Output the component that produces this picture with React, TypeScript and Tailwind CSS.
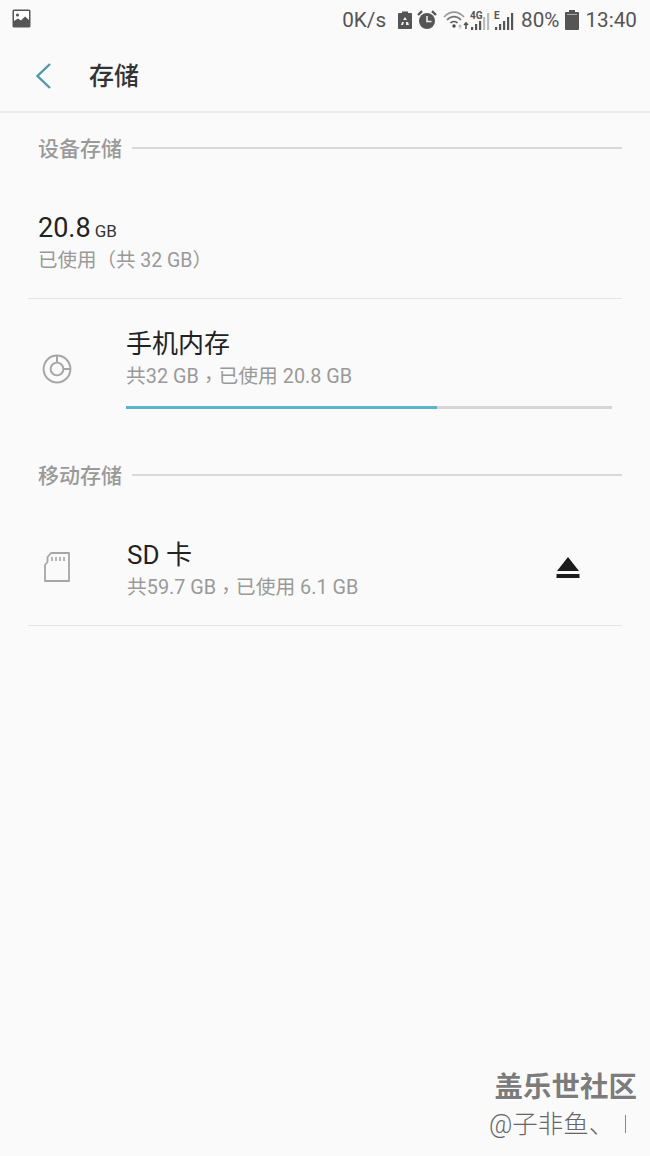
const FONT = "font-['Roboto','Noto_Sans_CJK_SC',sans-serif]";

// TC comma is centred in its box like the device font, it just needs to sit lower
function Comma() {
  return <span className="inline-block translate-y-[4px] font-['Noto_Sans_CJK_TC',sans-serif]">，</span>;
}

function StatusBar() {
  return (
    <div className="flex h-10 items-center pl-3 pr-[13px] text-[#555]">
      <svg width="19" height="19" viewBox="0 0 19 19" className="mb-[3px]">
        <rect x="0.5" y="0.5" width="18" height="18" rx="1.5" fill="#555" />
        <rect x="2" y="2" width="15" height="12" fill="#fff" />
        <circle cx="5.5" cy="6" r="1.6" fill="#555" />
        <path d="M2 14 L2 12 L6 9.5 L9 11.5 L13 7.5 L17 11 L17 14 Z" fill="#555" />
      </svg>
      <div className="ml-auto flex items-center">
        <span className="text-[20.7px] leading-none">0K/s</span>
        {/* power saving battery */}
        <svg width="14" height="18" viewBox="0 0 14 18" className="ml-[12px]">
          <path d="M4 0.5 H10 V2 H13 a1 1 0 0 1 1 1 V17 a1 1 0 0 1 -1 1 H1 a1 1 0 0 1 -1 -1 V3 a1 1 0 0 1 1 -1 H4 Z" fill="#555" />
          <path d="M7 6 L9 9 H5 Z M4 11 L6 11 L5 14 H3 Z M10 11 L11 14 H8 L8 11 Z" fill="#eee" />
        </svg>
        {/* alarm */}
        <svg width="20" height="20" viewBox="0 0 20 20" className="ml-[5px]">
          <circle cx="10" cy="11" r="8" fill="#555" />
          <path d="M1 5 L5 1.2 M15 1.2 L19 5" stroke="#555" strokeWidth="2.4" />
          <path d="M10 6 V11.5 H14.5" stroke="#eee" strokeWidth="1.6" fill="none" />
        </svg>
        {/* wifi */}
        <svg width="26" height="20" viewBox="0 0 26 20" className="ml-[6px]" fill="none">
          <path d="M1 7 C7 0.5 15 0.5 21 7" stroke="#999" strokeWidth="1.7" />
          <path d="M4 10 C8 5.5 14 5.5 18 10" stroke="#777" strokeWidth="1.7" />
          <path d="M7.5 13 C9.5 11 12.5 11 14.5 13" stroke="#555" strokeWidth="1.7" />
          <circle cx="11" cy="16" r="1.7" fill="#444" />
          <path d="M17 15 V19 M15.5 16.5 L17 15 L18.5 16.5" stroke="#bbb" strokeWidth="1.2" />
          <path d="M23 19 V13 M21 15 L23 13 L25 15" stroke="#555" strokeWidth="1.6" />
        </svg>
        {/* 4G signal */}
        <svg width="20" height="20" viewBox="0 0 20 20" className="ml-[1px]">
          <text x="0" y="9" fontSize="10" fontWeight="700" fill="#555" fontFamily="Roboto">4G</text>
          <path d="M1 17 h2.2 v3 h-2.2 Z M5 14 h2.2 v6 h-2.2 Z M9 11 h2.2 v9 h-2.2 Z" fill="#555" />
          <path d="M13 7 h2.2 v13 h-2.2 Z M17 3 h2.2 v17 h-2.2 Z" fill="#bbb" />
        </svg>
        {/* E signal */}
        <svg width="20" height="20" viewBox="0 0 20 20" className="ml-[4px]">
          <text x="0" y="9" fontSize="10" fontWeight="700" fill="#555" fontFamily="Roboto">E</text>
          <path d="M1 17 h2.2 v3 h-2.2 Z M5 14 h2.2 v6 h-2.2 Z M9 11 h2.2 v9 h-2.2 Z M13 7 h2.2 v13 h-2.2 Z M17 3 h2.2 v17 h-2.2 Z" fill="#555" />
        </svg>
        <span className="ml-[7px] text-[20.7px] leading-none">80%</span>
        <svg width="14" height="20" viewBox="0 0 14 20" className="ml-[6px]">
          <path d="M4 0 H10 V2 H13 a1 1 0 0 1 1 1 V19 a1 1 0 0 1 -1 1 H1 a1 1 0 0 1 -1 -1 V3 a1 1 0 0 1 1 -1 H4 Z" fill="#555" />
          <rect x="2" y="4" width="10" height="1" fill="#aaa" />
        </svg>
        <span className="ml-[6px] text-[20.7px] leading-none">13:40</span>
      </div>
    </div>
  );
}

function SectionHeader({ title }: { title: string }) {
  return (
    <div className="flex h-[36px] items-center gap-[10px] pl-[38px] pr-[28px]">
      <span className="mt-[3px] text-[21px] font-medium leading-none text-[#999]">{title}</span>
      <div className="h-[2px] flex-1 bg-[#d8d8d8]" />
    </div>
  );
}

export default function App() {
  return (
    <div className={`relative h-[1156px] w-[650px] overflow-hidden bg-[#fafafa] ${FONT}`}>
      <StatusBar />

      <div className="flex h-[73px] items-center border-b-2 border-[#ececec] pl-[35px]">
        <svg width="18" height="28" viewBox="0 0 18 28" fill="none">
          <path d="M15 2 L2.5 14 L15 26" stroke="#4f98a8" strokeWidth="2.4" />
        </svg>
        <span className="ml-[36px] mt-[2px] text-[25px] font-medium leading-none text-[#333]">存储</span>
      </div>

      <div className="mt-[17px]">
        <SectionHeader title="设备存储" />
      </div>

      <div className="ml-[38px] mt-[46px] flex items-baseline">
        <span className="text-[27px] leading-[32px] text-[#222]">20.8</span>
        <span className="ml-[4px] text-[17px] leading-none text-[#333]">GB</span>
      </div>
      <div className="ml-[38px] mt-[4px] text-[19.5px] leading-[26px] text-[#999]">已使用（共 32 GB）</div>

      <div className="mx-[28px] mt-[24px] h-[1px] bg-[#e4e4e4]" />

      <div className="flex pl-[42px] pr-[38px]">
        <svg width="30" height="30" viewBox="0 0 32 32" fill="none" className="mt-[55px] shrink-0">
          <circle cx="16" cy="16" r="14.3" stroke="#a6a6a6" strokeWidth="2.1" />
          <circle cx="16" cy="16" r="6.8" stroke="#a6a6a6" strokeWidth="2.1" />
          <path d="M16 2 V9 M23 16 H30" stroke="#a6a6a6" strokeWidth="2.1" />
        </svg>
        <div className="ml-[54px] flex-1">
          <div className="mt-[28px] text-[26px] leading-[34px] text-[#222]">手机内存</div>
          <div className="mt-[1px] h-[26px] text-[19.8px] leading-[26px] text-[#999]">共32 GB<Comma />已使用 20.8 GB</div>
          <div className="mt-[18px] h-[3px] bg-[#d6d6d6]">
            <div className="h-full w-[64%] bg-[#5ab4d0]" />
          </div>
        </div>
      </div>

      <div className="mt-[48px]">
        <SectionHeader title="移动存储" />
      </div>

      <div className="flex items-start pl-[44px] pr-[70px]">
        <svg width="26" height="30" viewBox="0 0 26 30" fill="none" className="mt-[59px] shrink-0">
          <path d="M7 1 H25 V29 H1 V13 L3.5 10 V5 Z" stroke="#a6a6a6" strokeWidth="1.8" strokeLinejoin="round" />
          <path d="M8 5 V9 M12 5 V9 M16 5 V9 M20 5 V9" stroke="#a6a6a6" strokeWidth="1.6" />
        </svg>
        <div className="ml-[57px]">
          <div className="mt-[45px] text-[26px] leading-[34px] text-[#222]">SD 卡</div>
          <div className="mt-[1px] h-[26px] text-[19.8px] leading-[26px] text-[#999]">共59.7 GB<Comma />已使用 6.1 GB</div>
        </div>
        <svg width="24" height="23" viewBox="0 0 24 23" className="ml-auto mt-[63px] shrink-0">
          <path d="M12 1 L23 15 H1 Z" fill="#1c1c1c" />
          <rect x="0.5" y="18" width="23" height="4" fill="#1c1c1c" />
        </svg>
      </div>

      <div className="mx-[28px] mt-[26px] h-[1px] bg-[#e4e4e4]" />

      {/* watermark */}
      <div className="absolute right-[13px] top-[1072px] flex flex-col items-end">
        <span className="text-[28.5px] font-bold leading-[32px] text-[#7c7c7c] [text-shadow:1px_1px_0_#fff]">盖乐世社区</span>
        <span className="mt-[6px] flex w-[148px] items-center text-[25.5px] font-light leading-[28px] text-[#666]">
          @子非鱼、
          <span className="ml-auto mr-[11px] h-[18px] w-[1.5px] bg-[#888]" />
        </span>
      </div>
    </div>
  );
}
